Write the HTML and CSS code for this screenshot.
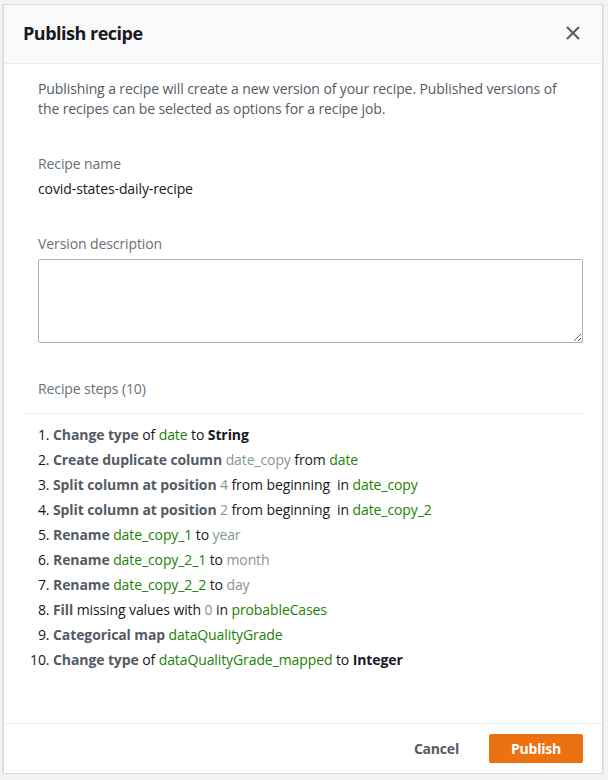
FILE: index.html
```html
<!DOCTYPE html>
<html lang="en">
<head>
<meta charset="utf-8">
<title>Publish recipe</title>
<link rel="stylesheet" href="styles.css">
</head>
<body>
<div class="modal">
  <div class="modal-header">
    <h2 class="modal-title">Publish recipe</h2>
    <button class="close-btn" aria-label="Close">
      <svg width="16" height="16" viewBox="0 0 16 16"><path d="M2 2 L14 14 M14 2 L2 14" stroke="#545b64" stroke-width="2" fill="none"/></svg>
    </button>
  </div>
  <div class="modal-body">
    <div class="indent">
      <p class="intro">Publishing a recipe will create a new version of your recipe. Published versions of the recipes can be selected as options for a recipe job.</p>
      <div class="field">
        <div class="label">Recipe name</div>
        <div class="value">covid-states-daily-recipe</div>
      </div>
      <div class="field">
        <div class="label">Version description</div>
        <textarea class="textarea"></textarea>
      </div>
      <div class="label steps-label">Recipe steps (10)</div>
    </div>
    <hr class="divider">
    <ol class="steps">
      <li><b>Change type</b> of <span class="g">date</span> to <strong>String</strong></li>
      <li><b>Create duplicate column</b> <span class="m">date_copy</span> from <span class="g">date</span></li>
      <li><b>Split column at position</b> <span class="m">4</span> from beginning &nbsp;in <span class="g">date_copy</span></li>
      <li><b>Split column at position</b> <span class="m">2</span> from beginning &nbsp;in <span class="g">date_copy_2</span></li>
      <li><b>Rename</b> <span class="g">date_copy_1</span> to <span class="m">year</span></li>
      <li><b>Rename</b> <span class="g">date_copy_2_1</span> to <span class="m">month</span></li>
      <li><b>Rename</b> <span class="g">date_copy_2_2</span> to <span class="m">day</span></li>
      <li><b>Fill</b> missing values with <span class="m">0</span> in <span class="g">probableCases</span></li>
      <li><b>Categorical map</b> <span class="g">dataQualityGrade</span></li>
      <li><b>Change type</b> of <span class="g">dataQualityGrade_mapped</span> to <strong>Integer</strong></li>
    </ol>
  </div>
  <div class="modal-footer">
    <button class="btn-link">Cancel</button>
    <button class="btn-primary">Publish</button>
  </div>
</div>
</body>
</html>
```

FILE: styles.css
```css
* { box-sizing: border-box; }
html, body {
  margin: 0;
  padding: 0;
  background: #f2f3f3;
  font-family: "Open Sans", Roboto, "Liberation Sans", Arial, sans-serif;
  font-size: 14px;
  letter-spacing: -0.1px;
  color: #16191f;
}
body { padding: 4px 0 0 3px; }
.modal {
  width: 600px;
  height: 770px;
  background: #fff;
  border: 1px solid #d5dbdb;
  box-shadow: 0 1px 1px rgba(0, 28, 36, 0.3);
  display: flex;
  flex-direction: column;
}
.modal-header {
  height: 59px;
  background: #fafafa;
  border-bottom: 1px solid #eaeded;
  display: flex;
  align-items: center;
  justify-content: space-between;
  padding: 0 21px 3px 19px;
}
.modal-title {
  margin: 0;
  font-size: 18px;
  font-weight: 700;
  color: #16191f;
  letter-spacing: -0.5px;
}
.close-btn {
  background: none;
  border: 0;
  padding: 0;
  width: 16px;
  height: 16px;
  display: flex;
  cursor: pointer;
}
.modal-body {
  flex: 1;
  padding: 15px 19px 0 19px;
}
.indent { padding-left: 15px; }
.intro {
  margin: 0;
  max-width: 525px;
  line-height: 20px;
  color: #545b64;
}
.field { margin-top: 35px; display: flex; flex-direction: column; gap: 5px; }
.label { color: #687078; line-height: 20px; }
.value { line-height: 20px; color: #16191f; }
.textarea {
  display: block;
  width: 100%;
  height: 84px;
  border: 1px solid #aab7b8;
  border-radius: 2px;
  resize: vertical;
  font-family: inherit;
}
.steps-label { margin-top: 36px; }
.divider {
  margin: 14px 0 8px 0;
  border: 0;
  border-top: 1px solid #eaeded;
}
.steps {
  margin: 0;
  padding-left: 30px;
  line-height: 25px;
  color: #16191f;
}
.steps b { color: #545b64; font-weight: 700; }
.steps strong { color: #16191f; font-weight: 700; }
.g { color: #1d8102; }
.m { color: #879596; }
.modal-footer {
  height: 50px;
  border-top: 1px solid #eaeded;
  display: flex;
  align-items: center;
  justify-content: flex-end;
  padding: 0 19px;
  gap: 30px;
}
.btn-link {
  background: none;
  border: 0;
  font-family: inherit;
  font-size: 14px;
  font-weight: 700;
  letter-spacing: -0.2px;
  color: #545b64;
  padding: 0;
}
.btn-primary {
  width: 94px;
  height: 29px;
  background: #ec7211;
  border: 1px solid #ec7211;
  border-radius: 2px;
  color: #fff;
  font-family: inherit;
  font-size: 14px;
  font-weight: 700;
  letter-spacing: -0.2px;
  padding: 0;
}
```
